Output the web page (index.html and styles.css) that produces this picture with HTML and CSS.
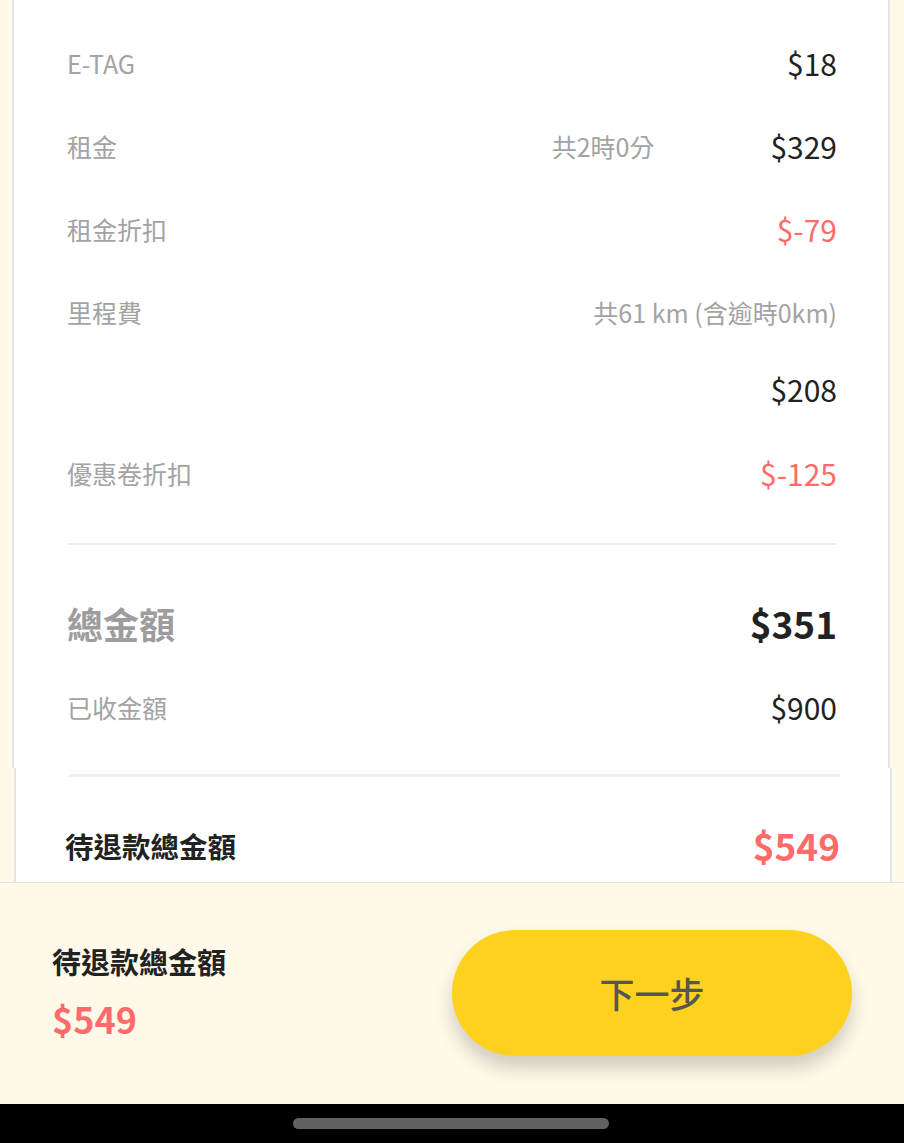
FILE: index.html
```html
<!DOCTYPE html>
<html lang="zh-Hant">
<head>
  <meta charset="UTF-8">
  <meta name="viewport" content="width=device-width, initial-scale=1.0">
  <title>結帳明細</title>
  <link rel="stylesheet" href="styles.css">
</head>
<body>

  <main class="scroll">
    <section class="card card-detail">
      <div class="row">
        <span class="label">E-TAG</span>
        <span class="value">$18</span>
      </div>

      <div class="row">
        <span class="label">租金</span>
        <span class="note note-rent">共2時0分</span>
        <span class="value">$329</span>
      </div>

      <div class="row">
        <span class="label">租金折扣</span>
        <span class="value red">$-79</span>
      </div>

      <div class="row-mileage">
        <div class="row">
          <span class="label">里程費</span>
          <span class="note">共61 km (含逾時0km)</span>
        </div>
        <div class="sub-value">
          <span class="value">$208</span>
        </div>
      </div>

      <div class="row">
        <span class="label">優惠卷折扣</span>
        <span class="value red">$-125</span>
      </div>

      <hr class="divider">

      <div class="row-total">
        <span class="total-label">總金額</span>
        <span class="total-value">$351</span>
      </div>

      <div class="row-received">
        <span class="label">已收金額</span>
        <span class="value">$900</span>
      </div>
    </section>

    <section class="card card-refund">
      <hr class="divider-thick">
      <div class="row-refund">
        <span class="refund-label">待退款總金額</span>
        <span class="refund-value">$549</span>
      </div>
    </section>
  </main>

  <footer class="bottom-bar">
    <div class="summary">
      <span class="summary-label">待退款總金額</span>
      <span class="summary-value">$549</span>
    </div>
    <button type="button" class="next-btn">下一步</button>
  </footer>

  <div class="nav-bar">
    <span class="nav-pill"></span>
  </div>

</body>
</html>
```

FILE: styles.css
```css
body {
  font-family: "Noto Sans CJK TC", "Noto Sans", sans-serif;
  margin: 0;
  padding: 0;
  background-color: #fff9e9;
  height: 1143px;
  overflow: hidden;
  display: flex;
  flex-direction: column;
}

.scroll {
  flex: 1;
  overflow: hidden;
}

.card {
  background-color: #fff;
  border: 2px solid #e6e6e6;
  border-top: none;
  border-bottom: none;
  box-sizing: border-box;
}

.card-detail {
  margin-left: 12px;
  width: 878px;
  padding: 21px 51px 0 53px;
}

.card-refund {
  margin-left: 14px;
  width: 878px;
  padding: 6px 50px 0 51px;
  background: linear-gradient(#fff 80%, #f8f8f8);
  height: 200px;
}

.row {
  display: flex;
  align-items: center;
  height: 83px;
}

.label {
  font-size: 25px;
  color: #a3a3a3;
  flex: 1;
}

.note {
  font-size: 25px;
  color: #a3a3a3;
}

.note-rent {
  margin-right: 116px;
}

.value {
  font-size: 30px;
  color: #222;
}

.red {
  color: #ff6b6b;
}

.sub-value {
  display: flex;
  justify-content: flex-end;
  height: 78px;
  line-height: 72px;
}

.divider {
  border: none;
  border-top: 2px solid #ededed;
  margin: 29px 0 0;
}

.row-total {
  display: flex;
  align-items: center;
  justify-content: space-between;
  padding-top: 55px;
  height: 46px;
}

.total-label {
  font-size: 36px;
  font-weight: bold;
  color: #9d9d9d;
}

.total-value {
  font-size: 37px;
  font-weight: bold;
  color: #222;
}

.row-received {
  display: flex;
  align-items: center;
  height: 122px;
}

.divider-thick {
  border: none;
  border-top: 3px solid #efefef;
  margin: 0 0 0 2px;
}

.row-refund {
  display: flex;
  align-items: center;
  justify-content: space-between;
  height: 136px;
}

.refund-label {
  font-size: 28.5px;
  font-weight: bold;
  color: #222;
  margin-left: -2px;
}

.refund-value {
  font-size: 37px;
  font-weight: bold;
  color: #ff6b6b;
}

.bottom-bar {
  height: 222px;
  box-sizing: border-box;
  background-color: #fff9e9;
  border-top: 1px solid #e4e1d8;
  display: flex;
  align-items: center;
  justify-content: space-between;
  padding: 0 52px 0 52px;
}

.summary {
  display: flex;
  flex-direction: column;
  gap: 13px;
  margin-top: -4px;
}

.summary-label {
  font-size: 29px;
  font-weight: bold;
  color: #222;
  line-height: 40px;
}

.summary-value {
  font-size: 36px;
  font-weight: bold;
  color: #ff6b6b;
  line-height: 48px;
}

.next-btn {
  width: 400px;
  height: 126px;
  border: none;
  border-radius: 63px;
  background-color: #fdd11e;
  color: #555;
  font-family: inherit;
  font-size: 35px;
  font-weight: 500;
  box-shadow: 0 12px 18px rgba(0, 0, 0, 0.18);
  margin-top: -2px;
  cursor: pointer;
}

.nav-bar {
  height: 39px;
  background-color: #000;
  display: flex;
  justify-content: center;
  align-items: center;
}

.nav-pill {
  width: 316px;
  height: 11px;
  border-radius: 6px;
  background-color: #616161;
  margin-right: 2px;
}
```
